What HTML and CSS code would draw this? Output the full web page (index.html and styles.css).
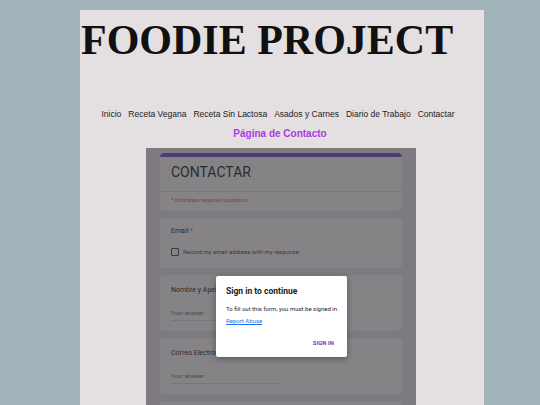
FILE: index.html
```html
<!DOCTYPE html>
<html lang="es">
<head>
<meta charset="utf-8">
<title>Foodie Project - Contacto</title>
<link rel="stylesheet" href="styles.css">
</head>
<body>
<div class="page">
  <h1 class="title">FOODIE PROJECT</h1>
  <nav class="nav">
    <a href="#">Inicio</a>
    <a href="#">Receta Vegana</a>
    <a href="#">Receta Sin Lactosa</a>
    <a href="#">Asados y Carnes</a>
    <a href="#">Diario de Trabajo</a>
    <a href="#">Contactar</a>
  </nav>
  <h2 class="subtitle">Página de Contacto</h2>
  <div class="frame">
    <div class="card header-card">
      <div class="card-bar"></div>
      <div class="form-title">CONTACTAR</div>
      <div class="required-note">* Indicates required question</div>
    </div>
    <div class="card">
      <div class="label">Email <span class="star">*</span></div>
      <div class="check-row"><span class="checkbox"></span><span>Record my email address with my response</span></div>
    </div>
    <div class="card">
      <div class="label">Nombre y Apellido</div>
      <div class="answer">Your answer</div>
    </div>
    <div class="card">
      <div class="label">Correo Electrónico</div>
      <div class="answer">Your answer</div>
    </div>
    <div class="card"></div>
    <div class="dialog">
      <div class="dialog-title">Sign in to continue</div>
      <div class="dialog-text">To fill out this form, you must be signed in.</div>
      <a class="dialog-link" href="#">Report Abuse</a>
      <div class="dialog-actions"><span class="sign-in">SIGN IN</span></div>
    </div>
  </div>
</div>
</body>
</html>
```

FILE: styles.css
```css
html, body {
  margin: 0;
  padding: 0;
  height: 100%;
  overflow: hidden;
}
body {
  background: #9fb3b8;
}
.page {
  margin: 10px 0 0 80px;
  width: 404px;
  height: 395px;
  background: #e4e0e1;
  overflow: hidden;
}
.title {
  margin: 9px 0 0 0;
  padding-left: 1px;
  font-family: "Liberation Serif", "Times New Roman", serif;
  font-weight: bold;
  font-size: 42px;
  line-height: 42px;
  color: #111;
  white-space: nowrap;
}
.nav {
  margin-top: 47px;
  display: flex;
  justify-content: center;
  gap: 7px;
  padding-right: 8px;
  font-family: "Liberation Sans", Arial, sans-serif;
  font-size: 8.5px;
  line-height: 12px;
}
.nav a {
  color: #222;
  text-decoration: none;
}
.subtitle {
  margin: 8px 0 0 0;
  text-align: center;
  padding-right: 4px;
  font-family: "Liberation Sans", Arial, sans-serif;
  font-size: 10px;
  font-weight: bold;
  line-height: 12px;
  color: #a93be2;
}
.frame {
  position: relative;
  margin: 8px auto 0 66px;
  width: 270px;
  height: 260px;
  background: #7d7b7f;
  padding-top: 5px;
  box-sizing: border-box;
  display: flex;
  flex-direction: column;
  align-items: center;
  gap: 7px;
  font-family: Roboto, "Liberation Sans", Arial, sans-serif;
}
.card {
  width: 242px;
  flex: none;
  background: #858386;
  border-radius: 4px;
  box-sizing: border-box;
  padding: 0 11px;
  height: 56px;
  color: #2c2b2d;
}
.header-card {
  height: 58px;
  padding: 0;
  overflow: hidden;
}
.card-bar {
  height: 4px;
  background: #4d3b77;
  border-radius: 4px 4px 0 0;
}
.form-title {
  padding: 6px 11px 0;
  font-size: 14px;
  line-height: 18px;
  height: 28px;
  border-bottom: 1px solid #78767a;
}
.required-note {
  padding: 0 11px;
  font-size: 6px;
  line-height: 16px;
  color: #8a3d3f;
}
.card:nth-child(2) {
  height: 50px;
}
.card:nth-child(2) .label {
  padding-top: 9px;
}
.label {
  padding-top: 11px;
  font-size: 7px;
  line-height: 9px;
  color: #2c2b2d;
}
.star {
  color: #8a3d3f;
}
.check-row {
  margin-top: 12px;
  display: flex;
  align-items: center;
  gap: 4px;
  font-size: 6px;
  line-height: 8px;
  color: #3a393b;
}
.checkbox {
  width: 8px;
  height: 8px;
  box-sizing: border-box;
  border: 1px solid #3a393b;
  border-radius: 1px;
}
.answer {
  margin-top: 14px;
  width: 109px;
  font-size: 6px;
  line-height: 8px;
  padding-bottom: 3px;
  color: #4a494c;
  border-bottom: 1px solid #77757a;
}
.dialog {
  position: absolute;
  left: 70px;
  top: 128px;
  width: 131px;
  height: 81px;
  box-sizing: border-box;
  padding: 9px 10px 0;
  background: #fff;
  border-radius: 2px;
  box-shadow: 0 2px 6px rgba(0, 0, 0, 0.35);
}
.dialog-title {
  font-size: 8.5px;
  font-weight: bold;
  line-height: 12px;
  color: #202124;
}
.dialog-text {
  margin-top: 8px;
  font-size: 6px;
  line-height: 8px;
  color: #202124;
  white-space: nowrap;
}
.dialog-link {
  display: block;
  width: max-content;
  margin-top: 4px;
  font-size: 6px;
  line-height: 8px;
  color: #1a73e8;
  text-decoration: underline;
}
.dialog-actions {
  margin-top: 14px;
  display: flex;
  justify-content: flex-end;
  padding-right: 3px;
  line-height: 8px;
}
.sign-in {
  font-size: 5.8px;
  font-weight: bold;
  line-height: 8px;
  color: #673ab7;
  letter-spacing: 0.1px;
}
```
